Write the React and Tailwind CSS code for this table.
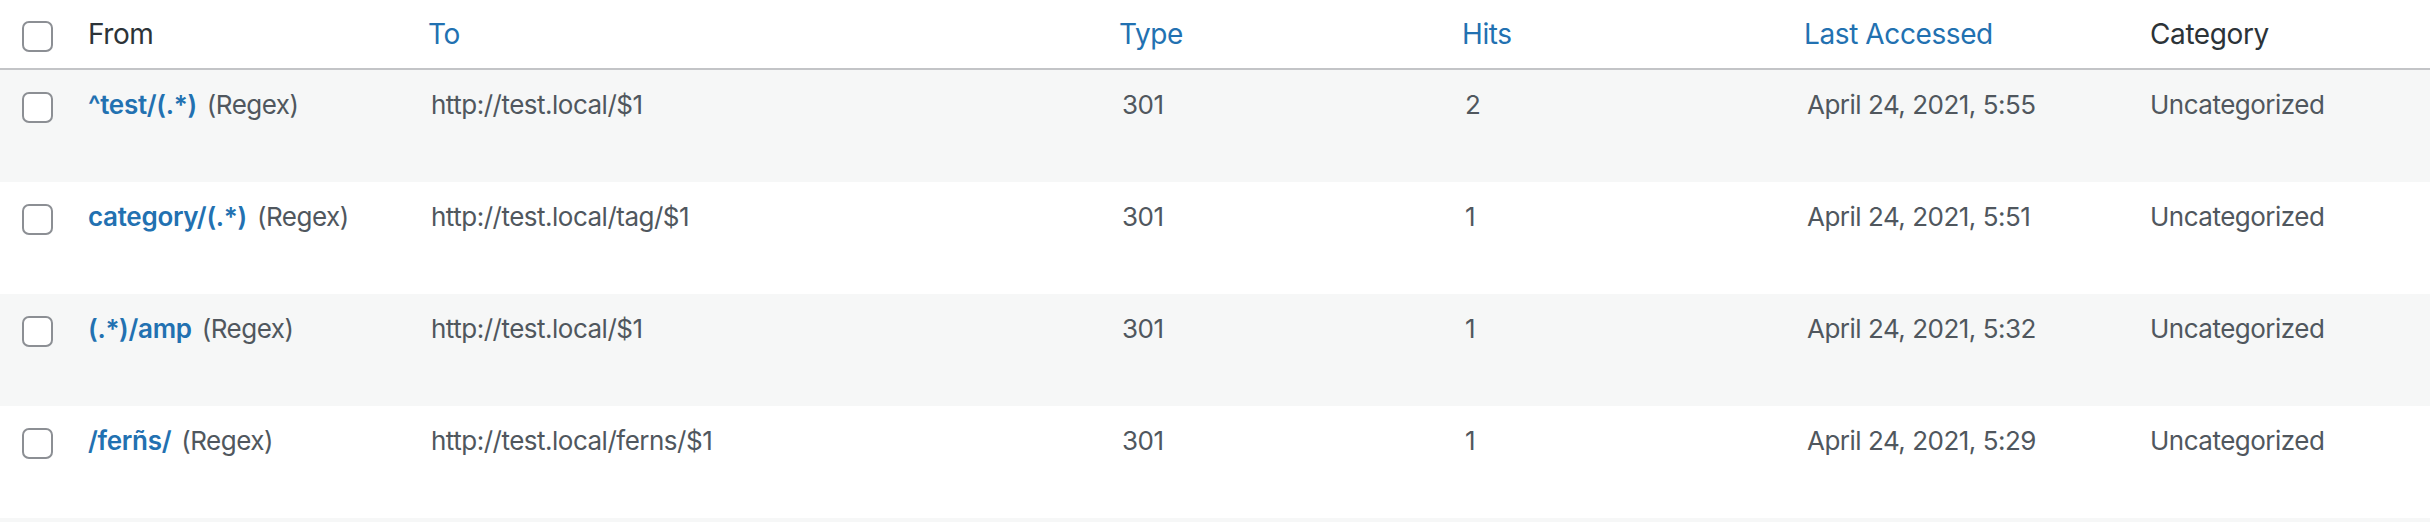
const COLS = "grid grid-cols-[68px_343px_691px_343px_342px_343px_1fr]";

const rows = [
  { from: "^test/(.*)", to: "http://test.local/$1", type: "301", hits: "2", last: "April 24, 2021, 5:55" },
  { from: "category/(.*)", to: "http://test.local/tag/$1", type: "301", hits: "1", last: "April 24, 2021, 5:51" },
  { from: "(.*)/amp", to: "http://test.local/$1", type: "301", hits: "1", last: "April 24, 2021, 5:32" },
  { from: "/ferñs/", to: "http://test.local/ferns/$1", type: "301", hits: "1", last: "April 24, 2021, 5:29" },
];

function Checkbox() {
  return (
    <span className="block w-[31px] h-[31px] ml-[22px] rounded-[7px] border-2 border-[#8c8f94] bg-white" />
  );
}

function HeadLink({ children }) {
  return <span className="pl-[17px] text-[#2271b1]">{children}</span>;
}

export default function App() {
  return (
    <div
      className="w-[2430px] bg-white text-[26px] leading-[36px] tracking-[-0.5px] text-[#50575e]"
      style={{ fontFamily: "Inter, 'Noto Sans', sans-serif" }}
    >
      <div className={`${COLS} h-[70px] border-b-2 border-[#c3c4c7] items-start text-[28px] leading-[38px] tracking-[-0.4px]`}>
        <div className="pt-[21px]">
          <Checkbox />
        </div>
        <div className="pt-[15px] pl-[20px] text-[#2c3338]">From</div>
        <div className="pt-[15px]"><HeadLink>To</HeadLink></div>
        <div className="pt-[15px]"><HeadLink>Type</HeadLink></div>
        <div className="pt-[15px]"><HeadLink>Hits</HeadLink></div>
        <div className="pt-[15px]"><HeadLink>Last Accessed</HeadLink></div>
        <div className="pt-[15px] pl-[20px] text-[#2c3338]">Category</div>
      </div>

      {rows.map((r, i) => (
        <div
          key={r.from}
          className={`${COLS} h-[112px] items-start ${i % 2 === 0 ? "bg-[#f6f7f7]" : "bg-white"}`}
        >
          <div className="pt-[22px]">
            <Checkbox />
          </div>
          <div className="pt-[17px] pl-[20px] whitespace-nowrap">
            <span className="font-semibold tracking-[-0.3px] text-[#2271b1]">{r.from}</span>
            <span className="ml-[10px]">(Regex)</span>
          </div>
          <div className="pt-[17px] pl-[20px]">{r.to}</div>
          <div className="pt-[17px] pl-[20px]">{r.type}</div>
          <div className="pt-[17px] pl-[20px]">{r.hits}</div>
          <div className="pt-[17px] pl-[20px]">{r.last}</div>
          <div className="pt-[17px] pl-[20px]">Uncategorized</div>
        </div>
      ))}
      <div className="h-[4px] bg-[#f6f7f7]" />
    </div>
  );
}
